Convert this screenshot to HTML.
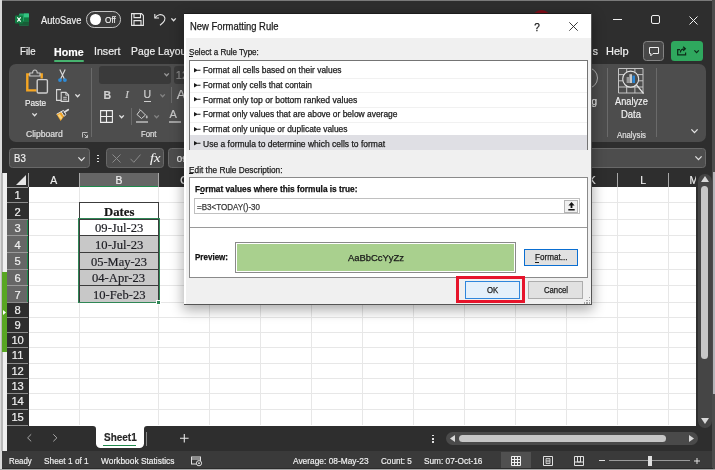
<!DOCTYPE html>
<html><head><meta charset="utf-8">
<title>Excel - New Formatting Rule</title>
<style>
*{box-sizing:border-box;margin:0;padding:0}
html,body{width:715px;height:470px;overflow:hidden;background:#1f1f1f;font-family:"Liberation Sans",sans-serif;}
.a{position:absolute}
#root{position:relative;width:715px;height:470px;overflow:hidden;background:#2e2e2e;color:#fff}
#root{will-change:transform}
.t{position:absolute;white-space:nowrap;line-height:1;transform-origin:0 50%}
svg{position:absolute;overflow:visible}
</style></head><body>
<div id="root">
<div class="a" style="left:0px;top:0px;width:715px;height:470px;background:#2e2e2e;"></div>
<div class="a" style="left:0px;top:0px;width:715px;height:1px;background:#7a7a7a;"></div>
<div class="a" style="left:0px;top:0px;width:2px;height:470px;background:#dadada;"></div>
<div class="a" style="left:1px;top:173px;width:1.6px;height:278.4px;background:#b8b8b8;"></div>
<div class="a" style="left:2.6px;top:173px;width:4.2px;height:278.4px;background:#f0f0f0;"></div>
<div class="a" style="left:2.2px;top:272px;width:4.5px;height:80px;background:#58a622;"></div>
<svg style="left:3px;top:309.5px" width="3" height="5" viewBox="0 0 3 5" ><path d="M0 0 L3 2.5 L0 5 Z" fill="#fff"/></svg>
<div class="a" style="left:712.4px;top:0px;width:2.6px;height:470px;background:#4c4c4c;"></div>
<div class="a" style="left:712.5px;top:172px;width:2.5px;height:222px;background:#b4b4b8;"></div>
<svg style="left:15px;top:13px" width="14" height="13" viewBox="0 0 14 13" ><rect x="4" y="0.5" width="10" height="12" rx="1" fill="#21a366"/>
<rect x="9" y="0.5" width="5" height="4" fill="#33c481"/>
<rect x="9" y="4.5" width="5" height="4" fill="#107c41"/>
<rect x="4" y="8.5" width="10" height="4" fill="#185c37"/>
<rect x="0" y="2.5" width="8" height="8" rx="1" fill="#107c41"/>
<path d="M2.3 4.3 L5.7 8.7 M5.7 4.3 L2.3 8.7" stroke="#fff" stroke-width="1.1"/></svg>
<div class="t" style="left:41.40px;top:15.72px;font-size:10.4px;color:#f0f0f0;transform:scaleX(0.8944);-webkit-text-stroke:0.18px #f0f0f0;">AutoSave</div>
<div class="a" style="left:86.3px;top:11.3px;width:35px;height:16.4px;background:#3a3a3a;border:1.4px solid #c4c4c4;border-radius:8.2px"></div>
<div class="a" style="left:89.8px;top:14.1px;width:10.8px;height:10.8px;background:#fff;border-radius:5.4px"></div>
<div class="t" style="left:104.50px;top:16.10px;font-size:8.8px;color:#f0f0f0;transform:scaleX(0.9333);-webkit-text-stroke:0.18px #f0f0f0;">Off</div>
<svg style="left:131px;top:13px" width="13" height="13" viewBox="0 0 13 13" fill="none" stroke="#e6e6e6" stroke-width="1.1"><path d="M0.6 0.6 H10.5 L12.4 2.5 V12.4 H0.6 Z"/><path d="M3 0.6 V4.6 H9.5 V0.6"/><path d="M3 12.4 V7.6 H10 V12.4"/></svg>
<svg style="left:154px;top:13px" width="12" height="13" viewBox="0 0 12 13" fill="none" stroke="#e6e6e6" stroke-width="1.1"><path d="M0.8 1 V5 H5"/><path d="M1 5 C3 1.5 7.5 0.5 10 3.2 C12.3 6 10.5 9 6 12.3"/></svg>
<svg style="left:170.9px;top:17.7px" width="5.2" height="3.2" viewBox="0 0 5.2 3.2" ><path d="M0.4 0.4 L2.6 2.8000000000000003 L4.8 0.4" fill="none" stroke="#e4e4e4" stroke-width="1.3"/></svg>
<div class="a" style="left:532px;top:10.1px;width:19px;height:19px;background:#7e0d18;border-radius:10px"></div>
<div class="a" style="left:612.5px;top:19px;width:9px;height:1px;background:#f0f0f0;"></div>
<div class="a" style="left:650.5px;top:15px;width:9px;height:9px;background:transparent;border:1px solid #f0f0f0;border-radius:2px"></div>
<svg style="left:689px;top:15.5px" width="9" height="9" viewBox="0 0 9 9" stroke="#f0f0f0" stroke-width="1"><path d="M0.5 0.5 L8.5 8.5 M8.5 0.5 L0.5 8.5"/></svg>
<div class="t" style="left:19.90px;top:46.62px;font-size:10.4px;color:#f0f0f0;transform:scaleX(0.9258);-webkit-text-stroke:0.18px #f0f0f0;">File</div>
<div class="t" style="left:54.00px;top:47.62px;font-size:10.4px;color:#fff;transform:scaleX(1.0253);font-weight:bold;-webkit-text-stroke:0.18px #fff;">Home</div>
<div class="a" style="left:54px;top:59.5px;width:30px;height:2px;background:#47b36f;border-radius:1px"></div>
<div class="t" style="left:93.60px;top:46.62px;font-size:10.4px;color:#f0f0f0;transform:scaleX(1.0198);-webkit-text-stroke:0.18px #f0f0f0;">Insert</div>
<div class="t" style="left:131.00px;top:46.62px;font-size:10.4px;color:#f0f0f0;transform:scaleX(0.9940);-webkit-text-stroke:0.18px #f0f0f0;">Page Layout</div>
<div class="t" style="left:592.80px;top:46.62px;font-size:10.4px;color:#f0f0f0;-webkit-text-stroke:0.18px #f0f0f0;">s</div>
<div class="t" style="left:606.00px;top:46.62px;font-size:10.4px;color:#f0f0f0;transform:scaleX(1.0576);-webkit-text-stroke:0.18px #f0f0f0;">Help</div>
<div class="a" style="left:643px;top:41.4px;width:21px;height:19.2px;background:#484848;border:1.2px solid #848484;border-radius:3.5px"></div>
<svg style="left:649px;top:46.5px" width="10" height="10" viewBox="0 0 10 10" fill="none" stroke="#f0f0f0" stroke-width="1"><path d="M0.5 0.5 H9.5 V6.5 H4 L1.8 8.8 V6.5 H0.5 Z"/></svg>
<div class="a" style="left:670.5px;top:41.4px;width:32.6px;height:19.2px;background:#2fa85e;border-radius:3.5px"></div>
<svg style="left:676.5px;top:46.3px" width="10" height="9.4" viewBox="0 0 10 9.4" fill="none" stroke="#0d2b18" stroke-width="1.2"><path d="M3 3.6 H0.7 V8.8 H8.6 V6.6"/><path d="M3.4 6.4 C3.4 4 5 2.8 7.8 2.8 M6.2 0.7 L8.4 2.8 L6.2 4.9"/></svg>
<svg style="left:694.1px;top:49.75px" width="5.2" height="3.1" viewBox="0 0 5.2 3.1" ><path d="M0.4 0.4 L2.6 2.7 L4.8 0.4" fill="none" stroke="#0d2b18" stroke-width="1.2"/></svg>
<div class="a" style="left:9px;top:64px;width:697px;height:78px;background:#4d4d4d;border-radius:7px"></div>
<svg style="left:26px;top:69px" width="22" height="25" viewBox="0 0 22 25" ><path d="M4 5.4 H1.3 V21.4 H10.5 M13.6 5.4 H15.7 V9.5" fill="none" stroke="#f5a623" stroke-width="2.4"/>
<path d="M3.8 7 V4 H6.6 Q6.6 1 8.9 1 Q11.2 1 11.2 4 H14 V7 Z" fill="#4d4d4d" stroke="#c8c8c8" stroke-width="1.1"/>
<rect x="11.2" y="10.6" width="10.2" height="13.4" rx="1.2" fill="#464646" stroke="#cfcfcf" stroke-width="1.4"/></svg>
<div class="t" style="left:24.80px;top:98.01px;font-size:9.8px;color:#f0f0f0;transform:scaleX(0.8423);-webkit-text-stroke:0.18px #f0f0f0;">Paste</div>
<svg style="left:31.799999999999997px;top:112.80000000000001px" width="5.2" height="3.2" viewBox="0 0 5.2 3.2" ><path d="M0.4 0.4 L2.6 2.8000000000000003 L4.8 0.4" fill="none" stroke="#e4e4e4" stroke-width="1.3"/></svg>
<svg style="left:58px;top:69px" width="9" height="13" viewBox="0 0 9 13" ><path d="M1.8 0.4 L6.4 10 M7.2 0.4 L2.6 10" stroke="#dcdcdc" stroke-width="1.1" fill="none"/>
<circle cx="2" cy="11.1" r="1.9" fill="#2e8cd8"/><circle cx="6.9" cy="11.1" r="1.9" fill="#2e8cd8"/></svg>
<svg style="left:56px;top:89px" width="13.2" height="13" viewBox="0 0 13.2 13" ><path d="M5 0.6 H0.6 V11.4 H5" fill="none" stroke="#d8d8d8" stroke-width="1.1"/>
<path d="M5.2 3.4 H10 L12.6 6 V12.4 H5.2 Z" fill="#4d4d4d" stroke="#d8d8d8" stroke-width="1.1"/><path d="M9.8 3.6 V6.2 H12.4 M7.2 8.3 H10.8 M7.2 10.2 H10.8" fill="none" stroke="#d8d8d8" stroke-width="0.9"/></svg>
<svg style="left:74.80000000000001px;top:94.2px" width="5.2" height="3.2" viewBox="0 0 5.2 3.2" ><path d="M0.4 0.4 L2.6 2.8000000000000003 L4.8 0.4" fill="none" stroke="#e4e4e4" stroke-width="1.3"/></svg>
<svg style="left:56px;top:109px" width="13.5" height="12.5" viewBox="0 0 13.5 12.5" ><path d="M0.5 5.2 L6.2 2.2 L8.6 6.6 L4.6 12 Z" fill="#f0a326"/>
<path d="M1.6 6.2 L5 10.8 L6.4 8.8 L3.8 5 Z" fill="#f7d382"/>
<path d="M5.2 2.6 L7.6 1.4 L10 5.6 L8.2 7.2 Z" fill="#4d4d4d" stroke="#e0e0e0" stroke-width="1"/>
<path d="M8.6 3 L12.2 0.8" stroke="#e0e0e0" stroke-width="1.8" stroke-linecap="round"/>
<path d="M0.5 5.2 L6.2 2.2" stroke="#e8e8e8" stroke-width="0.9"/></svg>
<div class="t" style="left:26.20px;top:129.90px;font-size:8.4px;color:#e0e0e0;transform:scaleX(1.0238);-webkit-text-stroke:0.18px #e0e0e0;">Clipboard</div>
<svg style="left:81.5px;top:132px" width="6" height="6" viewBox="0 0 6 6" ><path d="M0.5 5.5 V0.5 H5.5 M2.2 2.2 L5.3 5.3 M5.5 2.8 V5.5 H2.8" fill="none" stroke="#c8c8c8" stroke-width="0.9"/></svg>
<div class="a" style="left:91px;top:68px;width:1px;height:69px;background:#6a6a6a;"></div>
<div class="a" style="left:98.5px;top:66px;width:72px;height:17.5px;background:#3a3a3a;border-radius:3px"></div>
<svg style="left:164.4px;top:73.4px" width="5.2" height="3.2" viewBox="0 0 5.2 3.2" ><path d="M0.4 0.4 L2.6 2.8000000000000003 L4.8 0.4" fill="none" stroke="#9a9a9a" stroke-width="1.3"/></svg>
<div class="a" style="left:174px;top:66px;width:14px;height:17.5px;background:#3a3a3a;border-radius:3px 0 0 3px"></div>
<div class="t" style="left:175.80px;top:70.23px;font-size:11px;color:#8c8c8c;-webkit-text-stroke:0.18px #8c8c8c;">12</div>
<div class="t" style="left:103.50px;top:89.67px;font-size:10.5px;color:#cfcfcf;font-weight:bold;-webkit-text-stroke:0.18px #cfcfcf;">B</div>
<div class="t" style="left:125.30px;top:89.29px;font-size:10.8px;color:#cfcfcf;font-style:italic;font-family:'Liberation Serif',serif;-webkit-text-stroke:0.18px #cfcfcf;">I</div>
<div class="t" style="left:143.50px;top:89.37px;font-size:10.5px;color:#cfcfcf;-webkit-text-stroke:0.18px #cfcfcf;">U</div>
<div class="a" style="left:143.5px;top:100.6px;width:7.6px;height:1px;background:#cfcfcf;"></div>
<svg style="left:160.20000000000002px;top:94.4px" width="5.2" height="3.2" viewBox="0 0 5.2 3.2" ><path d="M0.4 0.4 L2.6 2.8000000000000003 L4.8 0.4" fill="none" stroke="#858585" stroke-width="1.3"/></svg>
<div class="a" style="left:171.3px;top:87px;width:1px;height:16px;background:#6a6a6a;"></div>
<div class="t" style="left:176.80px;top:88.45px;font-size:13px;color:#cfcfcf;-webkit-text-stroke:0.18px #cfcfcf;">A</div>
<svg style="left:100px;top:109.5px" width="13" height="13" viewBox="0 0 13 13" ><path d="M0.6 0.6 H12.4 V12.4 H0.6 Z M6.5 0.6 V12.4 M0.6 6.5 H12.4" fill="none" stroke="#f0f0f0" stroke-width="1.1"/></svg>
<svg style="left:119.10000000000001px;top:114.60000000000001px" width="5.2" height="3.2" viewBox="0 0 5.2 3.2" ><path d="M0.4 0.4 L2.6 2.8000000000000003 L4.8 0.4" fill="none" stroke="#e4e4e4" stroke-width="1.3"/></svg>
<div class="a" style="left:130.6px;top:108px;width:1px;height:17px;background:#6a6a6a;"></div>
<svg style="left:136px;top:109px" width="12" height="11" viewBox="0 0 12 11" ><path d="M4.5 1 L9.5 6 L5.5 9.5 L1 5.5 Z" fill="none" stroke="#d0d0d0" stroke-width="1"/><path d="M4.5 1 L3 0 M10.8 6.5 Q12 8.5 10.8 9.3 Q9.6 8.5 10.8 6.5" fill="#d0d0d0" stroke="#d0d0d0" stroke-width="0.6"/></svg>
<div class="a" style="left:135.5px;top:120.5px;width:12.5px;height:2.2px;background:#a0a0a0;"></div>
<svg style="left:154.20000000000002px;top:114.60000000000001px" width="5.2" height="3.2" viewBox="0 0 5.2 3.2" ><path d="M0.4 0.4 L2.6 2.8000000000000003 L4.8 0.4" fill="none" stroke="#858585" stroke-width="1.3"/></svg>
<div class="t" style="left:169.50px;top:109.13px;font-size:11px;color:#c8c8c8;-webkit-text-stroke:0.18px #c8c8c8;">A</div>
<div class="a" style="left:168.5px;top:120.5px;width:12px;height:2.2px;background:#a0a0a0;"></div>
<div class="t" style="left:140.80px;top:129.60px;font-size:9px;color:#e0e0e0;transform:scaleX(0.8607);-webkit-text-stroke:0.18px #e0e0e0;">Font</div>
<div class="t" style="left:591.50px;top:96.66px;font-size:10px;color:#e8e8e8;-webkit-text-stroke:0.18px #e8e8e8;">g</div>
<div class="a" style="left:576px;top:66.5px;width:22px;height:22px;background:transparent;border:1px solid #b0b0b0;border-radius:50%"></div>
<div class="a" style="left:607px;top:68px;width:1px;height:69px;background:#6a6a6a;"></div>
<div class="a" style="left:656px;top:68px;width:1px;height:69px;background:#6a6a6a;"></div>
<svg style="left:618px;top:68px" width="26" height="26" viewBox="0 0 26 26" ><path d="M0.5 0.5 H25 V25 H0.5 Z M0.5 6.6 H25 M0.5 12.8 H25 M0.5 19 H25 M8.7 0.5 V25 M16.9 0.5 V25" fill="none" stroke="#c4c4c4" stroke-width="1"/>
<circle cx="12.7" cy="11.1" r="8" fill="#4d4d4d" stroke="#e4e4e4" stroke-width="1.1"/>
<rect x="8.6" y="9" width="2.4" height="6" fill="#9a9a9a"/><rect x="11.4" y="6.2" width="2.6" height="8.8" fill="#c8c8c8"/><rect x="14.4" y="7.6" width="2.6" height="7.4" fill="#2b88d8"/>
<path d="M18.5 16.9 L25.6 25.6" stroke="#e4e4e4" stroke-width="1.4"/></svg>
<div class="t" style="left:614.80px;top:96.66px;font-size:10px;color:#f0f0f0;transform:scaleX(0.9220);-webkit-text-stroke:0.18px #f0f0f0;">Analyze</div>
<div class="t" style="left:621.40px;top:109.56px;font-size:10px;color:#f0f0f0;transform:scaleX(0.9468);-webkit-text-stroke:0.18px #f0f0f0;">Data</div>
<div class="t" style="left:617.10px;top:130.55px;font-size:8.8px;color:#e0e0e0;transform:scaleX(0.8853);-webkit-text-stroke:0.18px #e0e0e0;">Analysis</div>
<svg style="left:691.0px;top:129.0px" width="7" height="4" viewBox="0 0 7 4" ><path d="M0.4 0.4 L3.5 3.6 L6.6 0.4" fill="none" stroke="#e4e4e4" stroke-width="1.3"/></svg>
<div class="a" style="left:9px;top:148.3px;width:80.5px;height:19.3px;background:#4d4d4d;border:1px solid #686868;border-radius:3.5px"></div>
<div class="t" style="left:13.80px;top:153.52px;font-size:10.4px;color:#f0f0f0;transform:scaleX(0.9285);-webkit-text-stroke:0.18px #f0f0f0;">B3</div>
<svg style="left:77.8px;top:157.0px" width="7" height="4" viewBox="0 0 7 4" ><path d="M0.4 0.4 L3.5 3.6 L6.6 0.4" fill="none" stroke="#e8e8e8" stroke-width="1.2"/></svg>
<div class="a" style="left:97.3px;top:154.6px;width:1.5px;height:1.5px;background:#e0e0e0;"></div>
<div class="a" style="left:97.3px;top:157.6px;width:1.5px;height:1.5px;background:#e0e0e0;"></div>
<div class="a" style="left:97.3px;top:160.6px;width:1.5px;height:1.5px;background:#e0e0e0;"></div>
<div class="a" style="left:106px;top:148.3px;width:58px;height:19.3px;background:#4d4d4d;border:1px solid #686868;border-radius:3.5px"></div>
<svg style="left:111.5px;top:153.5px" width="9" height="9" viewBox="0 0 9 9" ><path d="M0.5 0.5 L8.5 8.5 M8.5 0.5 L0.5 8.5" fill="none" stroke="#8a8a8a" stroke-width="1"/></svg>
<svg style="left:129.5px;top:153.5px" width="11" height="9" viewBox="0 0 11 9" ><path d="M0.5 4.8 L3.8 8.3 L10.5 0.6" fill="none" stroke="#8a8a8a" stroke-width="1"/></svg>
<div class="t" style="left:150.30px;top:151.93px;font-size:12.5px;color:#f4f4f4;transform:scaleX(1.1640);font-style:italic;font-family:'Liberation Serif',serif;-webkit-text-stroke:0.05px #f4f4f4;">fx</div>
<div class="a" style="left:168px;top:148.3px;width:538px;height:19.3px;background:#4d4d4d;border:1px solid #686868;border-radius:3.5px"></div>
<div class="t" style="left:176.70px;top:154.21px;font-size:9.8px;color:#f0f0f0;-webkit-text-stroke:0.18px #f0f0f0;">09-07-2023</div>
<svg style="left:694.8px;top:155.5px" width="7" height="4" viewBox="0 0 7 4" ><path d="M0.4 0.4 L3.5 3.6 L6.6 0.4" fill="none" stroke="#e0e0e0" stroke-width="1.3"/></svg>
<div class="a" style="left:28.5px;top:187.3px;width:667.8px;height:238.7px;background:#fff;"></div>
<div class="a" style="left:6.8px;top:173px;width:689.5px;height:14.300000000000011px;background:#2e2e2e;"></div>
<div class="a" style="left:6.8px;top:187.3px;width:21.7px;height:237.7px;background:#2e2e2e;"></div>
<div class="a" style="left:79.8px;top:173px;width:78.7px;height:14.300000000000011px;background:#666;"></div>
<div class="a" style="left:79.8px;top:185.5px;width:78.7px;height:1.8px;background:#1f8a4c;"></div>
<div class="a" style="left:6.8px;top:219.3px;width:21.7px;height:83.19999999999999px;background:#666;"></div>
<div class="a" style="left:27.2px;top:219.3px;width:1.3px;height:83.19999999999999px;background:#1f8a4c;"></div>
<div class="a" style="left:78.8px;top:187.3px;width:1px;height:237.7px;background:#e7e7e7;"></div>
<div class="a" style="left:158.0px;top:187.3px;width:1px;height:237.7px;background:#e7e7e7;"></div>
<div class="a" style="left:209.2px;top:187.3px;width:1px;height:237.7px;background:#e7e7e7;"></div>
<div class="a" style="left:260.2px;top:187.3px;width:1px;height:237.7px;background:#e7e7e7;"></div>
<div class="a" style="left:311.2px;top:187.3px;width:1px;height:237.7px;background:#e7e7e7;"></div>
<div class="a" style="left:362.2px;top:187.3px;width:1px;height:237.7px;background:#e7e7e7;"></div>
<div class="a" style="left:413.2px;top:187.3px;width:1px;height:237.7px;background:#e7e7e7;"></div>
<div class="a" style="left:464.2px;top:187.3px;width:1px;height:237.7px;background:#e7e7e7;"></div>
<div class="a" style="left:515.2px;top:187.3px;width:1px;height:237.7px;background:#e7e7e7;"></div>
<div class="a" style="left:566.2px;top:187.3px;width:1px;height:237.7px;background:#e7e7e7;"></div>
<div class="a" style="left:617.2px;top:187.3px;width:1px;height:237.7px;background:#e7e7e7;"></div>
<div class="a" style="left:668.2px;top:187.3px;width:1px;height:237.7px;background:#e7e7e7;"></div>
<div class="a" style="left:28.5px;top:202.1px;width:667.8px;height:1px;background:#e7e7e7;"></div>
<div class="a" style="left:28.5px;top:218.8px;width:667.8px;height:1px;background:#e7e7e7;"></div>
<div class="a" style="left:28.5px;top:235.2px;width:667.8px;height:1px;background:#e7e7e7;"></div>
<div class="a" style="left:28.5px;top:251.9px;width:667.8px;height:1px;background:#e7e7e7;"></div>
<div class="a" style="left:28.5px;top:268.5px;width:667.8px;height:1px;background:#e7e7e7;"></div>
<div class="a" style="left:28.5px;top:285.0px;width:667.8px;height:1px;background:#e7e7e7;"></div>
<div class="a" style="left:28.5px;top:302.0px;width:667.8px;height:1px;background:#e7e7e7;"></div>
<div class="a" style="left:28.5px;top:317.0px;width:667.8px;height:1px;background:#e7e7e7;"></div>
<div class="a" style="left:28.5px;top:332.1px;width:667.8px;height:1px;background:#e7e7e7;"></div>
<div class="a" style="left:28.5px;top:347.2px;width:667.8px;height:1px;background:#e7e7e7;"></div>
<div class="a" style="left:28.5px;top:363.0px;width:667.8px;height:1px;background:#e7e7e7;"></div>
<div class="a" style="left:28.5px;top:378.1px;width:667.8px;height:1px;background:#e7e7e7;"></div>
<div class="a" style="left:28.5px;top:393.3px;width:667.8px;height:1px;background:#e7e7e7;"></div>
<div class="a" style="left:28.5px;top:409.0px;width:667.8px;height:1px;background:#e7e7e7;"></div>
<div class="a" style="left:27.7px;top:173px;width:1px;height:14.300000000000011px;background:#a8a8a8;"></div>
<div class="a" style="left:78.8px;top:173px;width:1px;height:14.300000000000011px;background:#a8a8a8;"></div>
<div class="a" style="left:158.0px;top:173px;width:1px;height:14.300000000000011px;background:#a8a8a8;"></div>
<div class="a" style="left:209.2px;top:173px;width:1px;height:14.300000000000011px;background:#a8a8a8;"></div>
<div class="a" style="left:260.2px;top:173px;width:1px;height:14.300000000000011px;background:#a8a8a8;"></div>
<div class="a" style="left:311.2px;top:173px;width:1px;height:14.300000000000011px;background:#a8a8a8;"></div>
<div class="a" style="left:362.2px;top:173px;width:1px;height:14.300000000000011px;background:#a8a8a8;"></div>
<div class="a" style="left:413.2px;top:173px;width:1px;height:14.300000000000011px;background:#a8a8a8;"></div>
<div class="a" style="left:464.2px;top:173px;width:1px;height:14.300000000000011px;background:#a8a8a8;"></div>
<div class="a" style="left:515.2px;top:173px;width:1px;height:14.300000000000011px;background:#a8a8a8;"></div>
<div class="a" style="left:566.2px;top:173px;width:1px;height:14.300000000000011px;background:#a8a8a8;"></div>
<div class="a" style="left:617.2px;top:173px;width:1px;height:14.300000000000011px;background:#a8a8a8;"></div>
<div class="a" style="left:668.2px;top:173px;width:1px;height:14.300000000000011px;background:#a8a8a8;"></div>
<div class="a" style="left:6.8px;top:202.1px;width:21.7px;height:1px;background:#8c8c8c;"></div>
<div class="a" style="left:6.8px;top:218.8px;width:21.7px;height:1px;background:#8c8c8c;"></div>
<div class="a" style="left:6.8px;top:235.2px;width:21.7px;height:1px;background:#9a9a9a;"></div>
<div class="a" style="left:6.8px;top:251.9px;width:21.7px;height:1px;background:#9a9a9a;"></div>
<div class="a" style="left:6.8px;top:268.5px;width:21.7px;height:1px;background:#9a9a9a;"></div>
<div class="a" style="left:6.8px;top:285.0px;width:21.7px;height:1px;background:#9a9a9a;"></div>
<div class="a" style="left:6.8px;top:302.0px;width:21.7px;height:1px;background:#8c8c8c;"></div>
<div class="a" style="left:6.8px;top:317.0px;width:21.7px;height:1px;background:#8c8c8c;"></div>
<div class="a" style="left:6.8px;top:332.1px;width:21.7px;height:1px;background:#8c8c8c;"></div>
<div class="a" style="left:6.8px;top:347.2px;width:21.7px;height:1px;background:#8c8c8c;"></div>
<div class="a" style="left:6.8px;top:363.0px;width:21.7px;height:1px;background:#8c8c8c;"></div>
<div class="a" style="left:6.8px;top:378.1px;width:21.7px;height:1px;background:#8c8c8c;"></div>
<div class="a" style="left:6.8px;top:393.3px;width:21.7px;height:1px;background:#8c8c8c;"></div>
<div class="a" style="left:6.8px;top:409.0px;width:21.7px;height:1px;background:#8c8c8c;"></div>
<div class="a" style="left:6.8px;top:424.5px;width:21.7px;height:1px;background:#8c8c8c;"></div>
<div class="a" style="left:6.8px;top:186.8px;width:21.7px;height:1px;background:#9a9a9a;"></div>
<svg style="left:16.3px;top:175.3px" width="10" height="10" viewBox="0 0 10 10" ><path d="M10 0 V10 H0 Z" fill="#e6e6e6"/></svg>
<div class="t" style="left:50.28px;top:175.62px;font-size:10.4px;color:#f0f0f0;-webkit-text-stroke:0.18px #f0f0f0;">A</div>
<div class="t" style="left:115.43px;top:175.62px;font-size:10.4px;color:#f0f0f0;-webkit-text-stroke:0.18px #f0f0f0;">B</div>
<div class="t" style="left:180.35px;top:175.62px;font-size:10.4px;color:#f0f0f0;-webkit-text-stroke:0.18px #f0f0f0;">C</div>
<div class="t" style="left:231.45px;top:175.62px;font-size:10.4px;color:#f0f0f0;-webkit-text-stroke:0.18px #f0f0f0;">D</div>
<div class="t" style="left:282.73px;top:175.62px;font-size:10.4px;color:#f0f0f0;-webkit-text-stroke:0.18px #f0f0f0;">E</div>
<div class="t" style="left:334.03px;top:175.62px;font-size:10.4px;color:#f0f0f0;-webkit-text-stroke:0.18px #f0f0f0;">F</div>
<div class="t" style="left:384.16px;top:175.62px;font-size:10.4px;color:#f0f0f0;-webkit-text-stroke:0.18px #f0f0f0;">G</div>
<div class="t" style="left:435.45px;top:175.62px;font-size:10.4px;color:#f0f0f0;-webkit-text-stroke:0.18px #f0f0f0;">H</div>
<div class="t" style="left:488.76px;top:175.62px;font-size:10.4px;color:#f0f0f0;-webkit-text-stroke:0.18px #f0f0f0;">I</div>
<div class="t" style="left:538.60px;top:175.62px;font-size:10.4px;color:#f0f0f0;-webkit-text-stroke:0.18px #f0f0f0;">J</div>
<div class="t" style="left:588.73px;top:175.62px;font-size:10.4px;color:#f0f0f0;-webkit-text-stroke:0.18px #f0f0f0;">K</div>
<div class="t" style="left:640.31px;top:175.62px;font-size:10.4px;color:#f0f0f0;-webkit-text-stroke:0.18px #f0f0f0;">L</div>
<div class="t" style="left:689.47px;top:175.62px;font-size:10.4px;color:#f0f0f0;-webkit-text-stroke:0.18px #f0f0f0;">M</div>
<div class="a" style="left:696.3px;top:173px;width:2px;height:255px;background:#2e2e2e;"></div>
<div class="t" style="left:14.49px;top:189.68px;font-size:11.2px;color:#f0f0f0;-webkit-text-stroke:0.18px #f0f0f0;">1</div>
<div class="t" style="left:14.49px;top:206.58px;font-size:11.2px;color:#f0f0f0;-webkit-text-stroke:0.18px #f0f0f0;">2</div>
<div class="t" style="left:14.49px;top:223.13px;font-size:11.2px;color:#f0f0f0;-webkit-text-stroke:0.18px #f0f0f0;">3</div>
<div class="t" style="left:14.49px;top:239.68px;font-size:11.2px;color:#f0f0f0;-webkit-text-stroke:0.18px #f0f0f0;">4</div>
<div class="t" style="left:14.49px;top:256.33px;font-size:11.2px;color:#f0f0f0;-webkit-text-stroke:0.18px #f0f0f0;">5</div>
<div class="t" style="left:14.49px;top:272.88px;font-size:11.2px;color:#f0f0f0;-webkit-text-stroke:0.18px #f0f0f0;">6</div>
<div class="t" style="left:14.49px;top:289.63px;font-size:11.2px;color:#f0f0f0;-webkit-text-stroke:0.18px #f0f0f0;">7</div>
<div class="t" style="left:14.49px;top:304.73px;font-size:11.2px;color:#f0f0f0;-webkit-text-stroke:0.18px #f0f0f0;">8</div>
<div class="t" style="left:14.49px;top:319.78px;font-size:11.2px;color:#f0f0f0;-webkit-text-stroke:0.18px #f0f0f0;">9</div>
<div class="t" style="left:11.38px;top:334.88px;font-size:11.2px;color:#f0f0f0;-webkit-text-stroke:0.18px #f0f0f0;">10</div>
<div class="t" style="left:11.79px;top:350.33px;font-size:11.2px;color:#f0f0f0;-webkit-text-stroke:0.18px #f0f0f0;">11</div>
<div class="t" style="left:11.38px;top:365.78px;font-size:11.2px;color:#f0f0f0;-webkit-text-stroke:0.18px #f0f0f0;">12</div>
<div class="t" style="left:11.38px;top:380.93px;font-size:11.2px;color:#f0f0f0;-webkit-text-stroke:0.18px #f0f0f0;">13</div>
<div class="t" style="left:11.38px;top:396.38px;font-size:11.2px;color:#f0f0f0;-webkit-text-stroke:0.18px #f0f0f0;">14</div>
<div class="t" style="left:11.38px;top:411.98px;font-size:11.2px;color:#f0f0f0;-webkit-text-stroke:0.18px #f0f0f0;">15</div>
<div class="a" style="left:79px;top:235.7px;width:80px;height:66.80000000000001px;background:#c8c8c8;"></div>
<div class="a" style="left:79px;top:202.1px;width:80px;height:1px;background:#3c3c3c;"></div>
<div class="a" style="left:79px;top:218.8px;width:80px;height:1px;background:#3c3c3c;"></div>
<div class="a" style="left:79px;top:235.2px;width:80px;height:1px;background:#3c3c3c;"></div>
<div class="a" style="left:79px;top:251.9px;width:80px;height:1px;background:#3c3c3c;"></div>
<div class="a" style="left:79px;top:268.5px;width:80px;height:1px;background:#3c3c3c;"></div>
<div class="a" style="left:79px;top:285.0px;width:80px;height:1px;background:#3c3c3c;"></div>
<div class="a" style="left:79px;top:302.0px;width:80px;height:1px;background:#3c3c3c;"></div>
<div class="a" style="left:78.7px;top:202.1px;width:1px;height:100.9px;background:#3c3c3c;"></div>
<div class="a" style="left:158.3px;top:202.1px;width:1px;height:100.9px;background:#3c3c3c;"></div>
<div class="a" style="left:78.4px;top:218.2px;width:81.4px;height:85px;background:transparent;border:1.7px solid #2f8756"></div>
<div class="a" style="left:156.3px;top:300.2px;width:5px;height:5px;background:#2f8756;border:1px solid #fff"></div>
<div class="t" style="left:104.00px;top:205.63px;font-size:12px;color:#151515;transform:scaleX(1.0608);font-weight:bold;font-family:'Liberation Serif',serif;-webkit-text-stroke:0.18px #151515;">Dates</div>
<div class="t" style="left:94.60px;top:222.12px;font-size:12.5px;color:#1c1c22;transform:scaleX(1.0102);font-family:'Liberation Serif',serif;-webkit-text-stroke:0.18px #1c1c22;">09-Jul-23</div>
<div class="t" style="left:94.60px;top:238.68px;font-size:12.5px;color:#1c1c22;transform:scaleX(1.0102);font-family:'Liberation Serif',serif;-webkit-text-stroke:0.18px #1c1c22;">10-Jul-23</div>
<div class="t" style="left:90.80px;top:255.57px;font-size:12.5px;color:#1c1c22;transform:scaleX(0.9958);font-family:'Liberation Serif',serif;-webkit-text-stroke:0.18px #1c1c22;">05-May-23</div>
<div class="t" style="left:92.30px;top:271.88px;font-size:12.5px;color:#1c1c22;transform:scaleX(1.0092);font-family:'Liberation Serif',serif;-webkit-text-stroke:0.18px #1c1c22;">04-Apr-23</div>
<div class="t" style="left:92.55px;top:288.62px;font-size:12.5px;color:#1c1c22;transform:scaleX(1.0082);font-family:'Liberation Serif',serif;-webkit-text-stroke:0.18px #1c1c22;">10-Feb-23</div>
<div class="a" style="left:697.5px;top:173.5px;width:14px;height:254px;background:#454545;border-radius:7px"></div>
<svg style="left:700.5px;top:176px" width="8" height="6" viewBox="0 0 8 6" ><path d="M4 0 L8 6 H0 Z" fill="#d8d8d8"/></svg>
<div class="a" style="left:701px;top:186px;width:7px;height:173px;background:#c6c6c6;border-radius:3.5px"></div>
<svg style="left:700.5px;top:417.5px" width="8" height="6" viewBox="0 0 8 6" ><path d="M0 0 H8 L4 6 Z" fill="#d8d8d8"/></svg>
<svg style="left:27.4px;top:434.4px" width="4.5" height="7.7" viewBox="0 0 4.5 7.7" ><path d="M4.2 0.3 L0.6 3.85 L4.2 7.4" fill="none" stroke="#a8a8a8" stroke-width="1"/></svg>
<svg style="left:53.4px;top:434.4px" width="4.5" height="7.7" viewBox="0 0 4.5 7.7" ><path d="M0.3 0.3 L3.9 3.85 L0.3 7.4" fill="none" stroke="#a8a8a8" stroke-width="1"/></svg>
<div class="a" style="left:96.4px;top:425.5px;width:47.3px;height:22.7px;background:#fff;border-radius:0 0 4.5px 4.5px"></div>
<svg style="left:93.4px;top:426px" width="3" height="3" viewBox="0 0 3 3" ><path d="M3 0 V3 H0 Q3 3 3 0 Z" fill="#fff" transform="translate(0,0) scale(1,-1) translate(0,-3)"/></svg>
<svg style="left:143.7px;top:426px" width="3" height="3" viewBox="0 0 3 3" ><path d="M0 0 V3 H3 Q0 3 0 0 Z" fill="#fff" transform="scale(1,-1) translate(0,-3)"/></svg>
<div class="t" style="left:103.50px;top:431.63px;font-size:11px;color:#262626;transform:scaleX(0.9065);font-weight:bold;-webkit-text-stroke:0.18px #262626;">Sheet1</div>
<div class="a" style="left:103.3px;top:445px;width:33.2px;height:1.3px;background:#1f8a4c;"></div>
<div class="a" style="left:146px;top:432px;width:1px;height:14px;background:#8a8a8a;"></div>
<svg style="left:180px;top:434px" width="8.6" height="8.6" viewBox="0 0 8.6 8.6" ><path d="M4.3 0 V8.6 M0 4.3 H8.6" stroke="#e6e6e6" stroke-width="1.1"/></svg>
<div class="a" style="left:432.3px;top:434.8px;width:1.6px;height:1.6px;background:#e0e0e0;"></div>
<div class="a" style="left:432.3px;top:438px;width:1.6px;height:1.6px;background:#e0e0e0;"></div>
<div class="a" style="left:432.3px;top:441.2px;width:1.6px;height:1.6px;background:#e0e0e0;"></div>
<div class="a" style="left:445.5px;top:432.3px;width:252px;height:13px;background:#4a4a4a;border-radius:6.5px"></div>
<svg style="left:449.5px;top:435.3px" width="5" height="7" viewBox="0 0 5 7" ><path d="M5 0 V7 L0 3.5 Z" fill="#d8d8d8"/></svg>
<div class="a" style="left:459px;top:435.4px;width:207px;height:7px;background:#c6c6c6;border-radius:3.5px"></div>
<svg style="left:688.5px;top:435.3px" width="5" height="7" viewBox="0 0 5 7" ><path d="M0 0 V7 L5 3.5 Z" fill="#d8d8d8"/></svg>
<div class="a" style="left:2.3px;top:451.4px;width:710.2px;height:18.6px;background:#3a3a3a;"></div>
<div class="t" style="left:9.00px;top:456.50px;font-size:8.8px;color:#f0f0f0;transform:scaleX(0.8927);-webkit-text-stroke:0.18px #f0f0f0;">Ready</div>
<div class="t" style="left:44.30px;top:456.50px;font-size:8.8px;color:#f0f0f0;transform:scaleX(0.9422);-webkit-text-stroke:0.18px #f0f0f0;">Sheet 1 of 1</div>
<div class="t" style="left:100.70px;top:456.50px;font-size:8.8px;color:#f0f0f0;transform:scaleX(0.9536);-webkit-text-stroke:0.18px #f0f0f0;">Workbook Statistics</div>
<svg style="left:190.5px;top:455.5px" width="11" height="10" viewBox="0 0 11 10" ><rect x="0.5" y="1" width="9" height="7" fill="none" stroke="#e0e0e0" stroke-width="1"/><path d="M0.5 3 H9.5" stroke="#e0e0e0"/><circle cx="8" cy="7.2" r="2.6" fill="#3a3a3a" stroke="#e0e0e0" stroke-width="1"/><circle cx="8" cy="7.2" r="0.9" fill="#e0e0e0"/></svg>
<div class="t" style="left:293.00px;top:456.50px;font-size:8.8px;color:#f0f0f0;transform:scaleX(0.9504);-webkit-text-stroke:0.18px #f0f0f0;">Average: 08-May-23</div>
<div class="t" style="left:380.70px;top:456.50px;font-size:8.8px;color:#f0f0f0;transform:scaleX(0.9232);-webkit-text-stroke:0.18px #f0f0f0;">Count: 5</div>
<div class="t" style="left:423.50px;top:456.50px;font-size:8.8px;color:#f0f0f0;transform:scaleX(0.9406);-webkit-text-stroke:0.18px #f0f0f0;">Sum: 07-Oct-16</div>
<div class="a" style="left:501px;top:452px;width:30px;height:17.5px;background:#505050;"></div>
<svg style="left:510.5px;top:455.8px" width="10" height="10" viewBox="0 0 10 10" ><path d="M0.5 0.5 H9.5 V9.5 H0.5 Z M0.5 3.5 H9.5 M0.5 6.5 H9.5 M3.5 0.5 V9.5 M6.5 0.5 V9.5" fill="none" stroke="#f0f0f0" stroke-width="1"/></svg>
<svg style="left:542.5px;top:455.8px" width="10" height="10" viewBox="0 0 10 10" ><path d="M0.5 0.5 H9.5 V9.5 H0.5 Z" fill="none" stroke="#e0e0e0" stroke-width="1"/><path d="M3 2.5 H7 V7.5 H3 Z M3 4.2 H7 M3 5.8 H7" fill="none" stroke="#e0e0e0" stroke-width="0.8"/></svg>
<svg style="left:573.5px;top:455.8px" width="10" height="10" viewBox="0 0 10 10" ><path d="M0.5 0.5 H9.5 V9.5 H0.5 Z" fill="none" stroke="#e0e0e0" stroke-width="1"/><path d="M3.5 0.5 V6 H6.5 V0.5 M0.5 6 H9.5" fill="none" stroke="#e0e0e0" stroke-width="1"/></svg>
<div class="a" style="left:599px;top:460.2px;width:5.5px;height:1px;background:#e0e0e0;"></div>
<div class="a" style="left:609.3px;top:460.2px;width:80.5px;height:1px;background:#9a9a9a;"></div>
<div class="a" style="left:648.3px;top:455.5px;width:3.4px;height:10px;background:#e0e0e0;"></div>
<svg style="left:693.5px;top:457.5px" width="6" height="6" viewBox="0 0 6 6" ><path d="M3 0 V6 M0 3 H6" stroke="#e0e0e0" stroke-width="1"/></svg>
<div class="a" style="left:183.5px;top:13.3px;width:408.8px;height:292px;background:#f0f0f0;border-top:1px solid #1c1c1c;border-right:1px solid #555;border-bottom:1px solid #555;box-shadow:0 4px 12px 1px rgba(0,0,0,0.33)"></div>
<div class="a" style="left:183.5px;top:14.3px;width:407.8px;height:23.5px;background:#fff;"></div>
<div class="a" style="left:183.5px;top:14.3px;width:2.1px;height:290px;background:#fff;"></div>
<div class="t" style="left:190.00px;top:21.67px;font-size:10.4px;color:#1a1a1a;transform:scaleX(0.9069);-webkit-text-stroke:0.25px #1a1a1a;">New Formatting Rule</div>
<div class="t" style="left:534.30px;top:22.66px;font-size:10px;color:#1a1a1a;-webkit-text-stroke:0.25px #1a1a1a;">?</div>
<svg style="left:568.5px;top:22px" width="9" height="9" viewBox="0 0 9 9" ><path d="M0.3 0.3 L8.7 8.7 M8.7 0.3 L0.3 8.7" stroke="#222" stroke-width="0.9"/></svg>
<div class="t" style="left:188.70px;top:48.20px;font-size:8.6px;color:#1a1a1a;transform:scaleX(0.9394);-webkit-text-stroke:0.25px #1a1a1a;">Select a Rule Type:</div>
<div class="a" style="left:188.7px;top:55.6px;width:4.5px;height:0.8px;background:#1a1a1a;"></div>
<div class="a" style="left:188.5px;top:59.8px;width:399.4px;height:90.6px;background:#fff;border:1px solid #747474"></div>
<div class="a" style="left:189.7px;top:135px;width:397.2px;height:14.5px;background:#dfdfe4;"></div>
<div class="a" style="left:189.7px;top:77.60000000000001px;width:397.2px;height:0.8px;background:#f1f1f1;"></div>
<svg style="left:194px;top:68.10000000000001px" width="6.5" height="4.6" viewBox="0 0 6.5 4.6" ><path d="M0 0 L3.9 2.3 L0 4.6 Z M3.5 1.8 H6.5 V2.8 H3.5 Z" fill="#1a1a1a"/></svg>
<div class="t" style="left:203.10px;top:66.20px;font-size:8.6px;color:#1a1a1a;transform:scaleX(0.9763);-webkit-text-stroke:0.25px #1a1a1a;">Format all cells based on their values</div>
<div class="a" style="left:189.7px;top:92.25000000000001px;width:397.2px;height:0.8px;background:#f1f1f1;"></div>
<svg style="left:194px;top:82.75000000000001px" width="6.5" height="4.6" viewBox="0 0 6.5 4.6" ><path d="M0 0 L3.9 2.3 L0 4.6 Z M3.5 1.8 H6.5 V2.8 H3.5 Z" fill="#1a1a1a"/></svg>
<div class="t" style="left:203.10px;top:80.85px;font-size:8.6px;color:#1a1a1a;transform:scaleX(0.9752);-webkit-text-stroke:0.25px #1a1a1a;">Format only cells that contain</div>
<div class="a" style="left:189.7px;top:106.9px;width:397.2px;height:0.8px;background:#f1f1f1;"></div>
<svg style="left:194px;top:97.4px" width="6.5" height="4.6" viewBox="0 0 6.5 4.6" ><path d="M0 0 L3.9 2.3 L0 4.6 Z M3.5 1.8 H6.5 V2.8 H3.5 Z" fill="#1a1a1a"/></svg>
<div class="t" style="left:203.10px;top:95.75px;font-size:8.6px;color:#1a1a1a;-webkit-text-stroke:0.25px #1a1a1a;">Format only top or bottom ranked values</div>
<div class="a" style="left:189.7px;top:121.55000000000001px;width:397.2px;height:0.8px;background:#f1f1f1;"></div>
<svg style="left:194px;top:112.05000000000001px" width="6.5" height="4.6" viewBox="0 0 6.5 4.6" ><path d="M0 0 L3.9 2.3 L0 4.6 Z M3.5 1.8 H6.5 V2.8 H3.5 Z" fill="#1a1a1a"/></svg>
<div class="t" style="left:203.10px;top:110.15px;font-size:8.6px;color:#1a1a1a;transform:scaleX(0.9811);-webkit-text-stroke:0.25px #1a1a1a;">Format only values that are above or below average</div>
<svg style="left:194px;top:126.7px" width="6.5" height="4.6" viewBox="0 0 6.5 4.6" ><path d="M0 0 L3.9 2.3 L0 4.6 Z M3.5 1.8 H6.5 V2.8 H3.5 Z" fill="#1a1a1a"/></svg>
<div class="t" style="left:203.10px;top:124.80px;font-size:8.6px;color:#1a1a1a;transform:scaleX(0.9789);-webkit-text-stroke:0.25px #1a1a1a;">Format only unique or duplicate values</div>
<svg style="left:194px;top:141.35px" width="6.5" height="4.6" viewBox="0 0 6.5 4.6" ><path d="M0 0 L3.9 2.3 L0 4.6 Z M3.5 1.8 H6.5 V2.8 H3.5 Z" fill="#1a1a1a"/></svg>
<div class="t" style="left:203.10px;top:139.70px;font-size:8.6px;color:#1a1a1a;transform:scaleX(0.9898);-webkit-text-stroke:0.25px #1a1a1a;">Use a formula to determine which cells to format</div>
<div class="t" style="left:188.80px;top:165.60px;font-size:8.6px;color:#1a1a1a;transform:scaleX(0.9643);-webkit-text-stroke:0.25px #1a1a1a;">Edit the Rule Description:</div>
<div class="a" style="left:188.8px;top:173.4px;width:4px;height:0.8px;background:#1a1a1a;"></div>
<div class="a" style="left:188.7px;top:177px;width:399.5px;height:100.7px;background:#fff;border:1px solid #8a8a8a"></div>
<div class="t" style="left:195.00px;top:184.75px;font-size:8.6px;color:#111;transform:scaleX(0.9667);font-weight:bold;-webkit-text-stroke:0.25px #111;">Format values where this formula is true:</div>
<div class="a" style="left:199.6px;top:192.9px;width:4.3px;height:0.8px;background:#111;"></div>
<div class="a" style="left:193.5px;top:198px;width:386.2px;height:15.8px;background:#fff;border:1px solid #c0c0c0"></div>
<div class="t" style="left:197.20px;top:202.90px;font-size:8.4px;color:#3a3a3a;transform:scaleX(0.9577);-webkit-text-stroke:0.25px #3a3a3a;">=B3&lt;TODAY()-30</div>
<div class="a" style="left:563.7px;top:199.5px;width:14.5px;height:13px;background:#f0f0f0;border:1px solid #b4b4b4"></div>
<svg style="left:567.5px;top:202px" width="7" height="8.5" viewBox="0 0 7 8.5" ><path d="M3.5 0 L6.6 3.6 H4.4 V6 H2.6 V3.6 H0.4 Z M0.3 7 H6.7 V8.5 H0.3 Z" fill="#111"/></svg>
<div class="a" style="left:189.7px;top:226.6px;width:397.5px;height:0.9px;background:#9a9a9a;"></div>
<div class="t" style="left:194.70px;top:253.10px;font-size:8.6px;color:#111;transform:scaleX(0.9336);font-weight:bold;-webkit-text-stroke:0.25px #111;">Preview:</div>
<div class="a" style="left:235.4px;top:241.5px;width:281px;height:31px;background:#fff;border:1px solid #8a8a8a"></div>
<div class="a" style="left:237.4px;top:243.5px;width:277px;height:27px;background:#a9d08e;"></div>
<div class="t" style="left:347.70px;top:253.01px;font-size:9.4px;color:#1a1a1a;transform:scaleX(1.0045);-webkit-text-stroke:0.25px #1a1a1a;">AaBbCcYyZz</div>
<div class="a" style="left:523.6px;top:248.5px;width:54.6px;height:17.3px;background:#e1e1e1;border:1.8px solid #0a6ed1"></div>
<div class="t" style="left:534.80px;top:253.10px;font-size:8.6px;color:#1a1a1a;transform:scaleX(0.9424);-webkit-text-stroke:0.25px #1a1a1a;">Format...</div>
<div class="a" style="left:534.8px;top:261.6px;width:4.3px;height:0.8px;background:#1a1a1a;"></div>
<div class="a" style="left:456.1px;top:276.1px;width:68.9px;height:27.2px;background:transparent;border:3px solid #e6142b"></div>
<div class="a" style="left:464.6px;top:280.6px;width:55.4px;height:18.2px;background:#e4f0fb;border:1.2px solid #2f86dc"></div>
<div class="t" style="left:487.10px;top:285.75px;font-size:8.6px;color:#1a1a1a;transform:scaleX(0.9020);-webkit-text-stroke:0.25px #1a1a1a;">OK</div>
<div class="a" style="left:528.1px;top:280.6px;width:54.7px;height:18.2px;background:#e1e1e1;border:1px solid #adadad"></div>
<div class="t" style="left:543.60px;top:285.75px;font-size:8.6px;color:#1a1a1a;transform:scaleX(0.8972);-webkit-text-stroke:0.25px #1a1a1a;">Cancel</div>
<div class="a" style="left:589.1px;top:296.8px;width:1.4px;height:1.4px;background:#a4a4a4;"></div>
<div class="a" style="left:586.4px;top:299.6px;width:1.4px;height:1.4px;background:#a4a4a4;"></div>
<div class="a" style="left:589.1px;top:299.6px;width:1.4px;height:1.4px;background:#a4a4a4;"></div>
<div class="a" style="left:583.7px;top:302.3px;width:1.4px;height:1.4px;background:#a4a4a4;"></div>
<div class="a" style="left:586.4px;top:302.3px;width:1.4px;height:1.4px;background:#a4a4a4;"></div>
<div class="a" style="left:589.1px;top:302.3px;width:1.4px;height:1.4px;background:#a4a4a4;"></div>
<div class="a" style="left:2px;top:467.7px;width:711px;height:1px;background:#2b2b2b;"></div>
<div class="a" style="left:0px;top:468.6px;width:715px;height:1.4px;background:#a6a6a6;"></div>
</div>
</body></html>
